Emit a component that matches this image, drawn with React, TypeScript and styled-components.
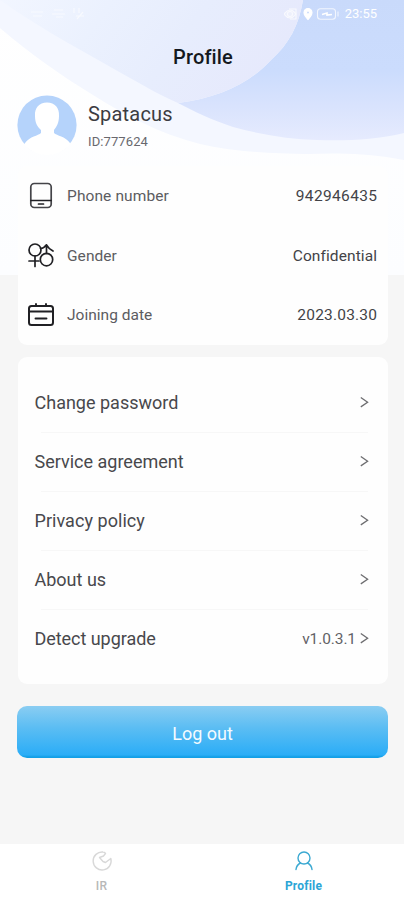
import React from "react";
import styled, { createGlobalStyle } from "styled-components";

const GlobalStyle = createGlobalStyle`
  * { box-sizing: border-box; }
  body { margin: 0; background: #f6f6f6; font-family: Roboto, "Liberation Sans", sans-serif; }
`;

const Screen = styled.div`
  position: relative;
  display: flex;
  flex-direction: column;
  width: 404px;
  height: 900px;
  overflow: hidden;
  background: #f6f6f6;
`;

const Backdrop = styled.svg`
  position: absolute;
  inset: 0 0 auto 0;
`;

const Content = styled.div`
  position: relative;
  flex: 1;
  display: flex;
  flex-direction: column;
`;

const StatusBar = styled.div`
  display: flex;
  align-items: center;
  height: 28px;
  padding: 0 27px 0 29px;
  color: #fff;
`;

const StatusGroup = styled.div<{ $end?: boolean }>`
  display: flex;
  align-items: center;
  margin-left: ${(p) => (p.$end ? "auto" : "0")};
`;

const Clock = styled.span`
  margin-left: 5px;
  font-size: 13px;
  line-height: 16px;
`;

const Title = styled.h1`
  margin: 0;
  height: 58px;
  padding-left: 2px;
  font-size: 20px;
  font-weight: 500;
  line-height: 58px;
  letter-spacing: 0.15px;
  text-align: center;
  color: #141820;
`;

const User = styled.div`
  display: flex;
  height: 80px;
  padding: 9px 17px 0;
`;

const UserText = styled.div`
  display: flex;
  flex-direction: column;
  margin-left: 11px;
`;

const UserName = styled.div`
  margin-top: 6px;
  font-size: 20px;
  line-height: 26px;
  letter-spacing: 0.2px;
  color: #3c3c42;
`;

const UserId = styled.div`
  margin-top: 7px;
  font-size: 13px;
  line-height: 16px;
  letter-spacing: 0.1px;
  color: #68686e;
`;

const Card = styled.section<{ $inset: string; $gap: number }>`
  margin: 0 16px ${(p) => p.$gap}px 17.5px;
  padding: ${(p) => p.$inset};
  border-radius: 9px;
  background: #fefefe;
`;

const InfoRow = styled.div`
  display: flex;
  align-items: center;
  height: 59.6px;
  padding-top: 1px;
  font-size: 15.5px;
  color: #5c5c61;
`;

const InfoIcon = styled.svg`
  width: 28px;
  height: 28px;
  margin-right: 12px;
  fill: none;
  stroke: #202024;
  stroke-width: 1.7;
  stroke-linecap: round;
  stroke-linejoin: round;
`;

const Label = styled.span<{ $track: number }>`
  letter-spacing: ${(p) => p.$track}px;
`;

const InfoValue = styled.span<{ $track: number }>`
  margin-left: auto;
  margin-right: ${(p) => 1 - p.$track}px;
  letter-spacing: ${(p) => p.$track}px;
  color: #434347;
`;

const MenuRow = styled.div`
  display: flex;
  align-items: center;
  height: 59px;
  font-size: 18px;
  color: #48484c;

  & + & {
    background: linear-gradient(#f7f7f7, #f7f7f7) 6px 0 / 327px 1px no-repeat;
  }
`;

const Version = styled.span`
  padding-top: 2px;
  font-size: 15.5px;
  letter-spacing: -0.1px;
  color: #626266;
`;

const MenuEnd = styled.span`
  display: flex;
  align-items: center;
  gap: 4px;
  margin-left: auto;
`;

const LogoutButton = styled.button`
  margin: 0 16px 0 17px;
  padding: 4px 6px 1px;
  height: 52px;
  border: 0;
  border-radius: 10px;
  background: linear-gradient(180deg, #8acdf2 0%, #5bbdf3 42%, #2badf7 94%, #129fe6 98%);
  font: 400 18px Roboto, sans-serif;
  color: #f4fbff;
`;

const TabBar = styled.nav`
  position: relative;
  display: grid;
  grid-template-columns: 1fr 1fr;
  height: 56px;
  background: #fff;
`;

const Tab = styled.div<{ $active?: boolean }>`
  display: flex;
  flex-direction: column;
  align-items: center;
  padding: 6px 0 0 1px;
  gap: 5px;
  font-size: 12px;
  font-weight: ${(p) => (p.$active ? 700 : 500)};
  line-height: 18px;
  letter-spacing: 0.2px;
  color: ${(p) => (p.$active ? "#2ba5d6" : "#b8b8b8")};
`;

const TabIcon = styled.svg`
  width: 22px;
  height: 22px;
  fill: none;
  stroke-width: 1.4;
  stroke-linecap: round;
  stroke-linejoin: round;
`;

function Waves() {
  return (
    <Backdrop width="404" height="275" viewBox="0 0 404 275">
      <defs>
        <linearGradient id="deep" x1="0" y1="0" x2="0" y2="1">
          <stop offset="0" stopColor="#c9dafb" />
          <stop offset="0.5" stopColor="#cbdcfd" />
          <stop offset="0.76" stopColor="#d9e3fd" />
          <stop offset="1" stopColor="#e6ebfe" />
        </linearGradient>
        <linearGradient id="orb" x1="0" y1="0" x2="1" y2="0.25">
          <stop offset="0" stopColor="#f2f6ff" />
          <stop offset="0.35" stopColor="#ebf1fe" />
          <stop offset="0.65" stopColor="#e7edfd" />
          <stop offset="1" stopColor="#e6e9fc" />
        </linearGradient>
        <linearGradient id="base" x1="0" y1="0" x2="0" y2="1">
          <stop offset="0" stopColor="#fff" />
          <stop offset="1" stopColor="#fcfdff" />
        </linearGradient>
      </defs>
      <rect width="404" height="275" fill="url(#base)" />
      <path d="M0 0H404V160Q370 153 333 153.500C290 155 240 153 200 144C160 134 125 115 93 95C60 75 28 52 0 28Z" fill="#f4f7ff" />
      <path d="M178 103C218 98 250 83 271 60C289 44 299 25 303 0H404V133C375 140 345 141 317 140C290 139 262 135 233 127C212 120 195 112 178 103Z" fill="url(#deep)" />
      <path d="M0 0H303C299 25 289 44 271 60C250 83 218 98 178 103C160 95 146 87 130 78C92 56 45 32 0 0Z" fill="url(#orb)" />
    </Backdrop>
  );
}

function Avatar() {
  return (
    <svg width="60" height="60" viewBox="0 0 60 60">
      <defs>
        <clipPath id="disc"><circle cx="30" cy="30" r="30" /></clipPath>
      </defs>
      <circle cx="30" cy="30" r="29.6" fill="#b5d3fb" />
      <g clipPath="url(#disc)" fill="#fff">
        <path d="M30 7.500C38 7.500 42.500 13 42 21C42 28 39.500 32 37 35V38C40 41 48 41 53 48L60 60H0L8 48C13 41 21 41 24 38V35C20.500 32 18 28 18 21C17.500 13 22 7.500 30 7.500Z" />
        <path d="M4 49H56V60H4Z" />
      </g>
    </svg>
  );
}

const PhoneIcon = () => (
  <InfoIcon viewBox="0 0 28 28">
    <rect x="3.800" y="1.500" width="20.400" height="24" rx="3.500" stroke="#444448" />
    <path d="M4 18.500H24M11.500 22H16.500" />
  </InfoIcon>
);

const GenderIcon = () => (
  <InfoIcon viewBox="0 0 28 28">
    <circle cx="8" cy="8" r="6" />
    <circle cx="19.500" cy="17.600" r="6.200" />
    <path d="M8 14V24.500M2 19H12M19.500 11.500V3M13.500 6.500Q17.500 6 19.500 2.800Q21.500 6.500 26 9" />
  </InfoIcon>
);

const CalendarIcon = () => (
  <InfoIcon viewBox="0 0 28 28">
    <rect x="2" y="5" width="24" height="19" rx="2.500" strokeWidth="2" />
    <path d="M2 10.500H26M9 3V5M19 3V5M8.500 17.500H19.500" strokeWidth="1.900" />
  </InfoIcon>
);

const Chevron = () => (
  <svg width="9" height="12" viewBox="0 0 9 12" fill="none" stroke="#6d6d70" strokeWidth="1.300">
    <path d="M0.800 1.500L7.600 6.200L0.800 10.900" />
  </svg>
);

const infoRows = [
  { icon: <PhoneIcon />, label: "Phone number", value: "942946435", track: 0.1, valueTrack: 0.35 },
  { icon: <GenderIcon />, label: "Gender", value: "Confidential", track: 0.05, valueTrack: 0.1 },
  { icon: <CalendarIcon />, label: "Joining date", value: "2023.03.30", track: 0.02, valueTrack: 0.2 },
];

const menuRows = [
  { label: "Change password", track: 0 },
  { label: "Service agreement", track: 0 },
  { label: "Privacy policy", track: 0.05 },
  { label: "About us", track: 0 },
  { label: "Detect upgrade", track: -0.05, version: "v1.0.3.1" },
];

export default function App() {
  return (
    <Screen>
      <GlobalStyle />
      <Waves />
      <Content>
        <StatusBar>
          <StatusGroup>
            <svg width="60" height="16" viewBox="0 0 60 16" fill="none" stroke="#fff" strokeWidth="1.200" opacity=".6">
              <path d="M2 6H14M4 10H13M25 4H34M23 8H36M27 11H34M45 2V7M50 2V7M47 10H55M48 13L54 6" />
            </svg>
          </StatusGroup>
          <StatusGroup $end>
            <svg width="56" height="16" viewBox="0 0 56 16" fill="none" stroke="#fff" strokeWidth="1.100">
              <g opacity=".75">
                <path d="M0 8Q6 0 12 8Q6 16 0 8Z" fill="#fff" fillOpacity=".4" />
                <circle cx="6" cy="8" r="2.500" />
                <path d="M5 3H12V13H6" />
              </g>
              <path d="M24 2.500A4 4 0 0 1 28 6.500C28 9.500 24 13.500 24 13.500S20 9.500 20 6.500A4 4 0 0 1 24 2.500ZM24 5A1.500 1.500 0 1 0 24 8A1.500 1.500 0 1 0 24 5Z" fill="#fff" fillRule="evenodd" />
              <rect x="33.500" y="2.800" width="18" height="10.400" rx="3" opacity=".75" />
              <path d="M54 5.500V10.500" opacity=".75" />
              <path d="M38 8.500L43 7V9L48 8.500" strokeWidth="1.600" />
            </svg>
            <Clock>23:55</Clock>
          </StatusGroup>
        </StatusBar>
        <Title>Profile</Title>
        <User>
          <Avatar />
          <UserText>
            <UserName>Spatacus</UserName>
            <UserId>ID:777624</UserId>
          </UserText>
        </User>
        <Card $inset="0 10px 0 9.5px" $gap={12}>
          {infoRows.map((r) => (
            <InfoRow key={r.label}>
              {r.icon}
              <Label $track={r.track}>{r.label}</Label>
              <InfoValue $track={r.valueTrack}>{r.value}</InfoValue>
            </InfoRow>
          ))}
        </Card>
        <Card $inset="16px 19px 16px 17px" $gap={22}>
          {menuRows.map((r) => (
            <MenuRow key={r.label}>
              <Label $track={r.track}>{r.label}</Label>
              <MenuEnd>
                {r.version && <Version>{r.version}</Version>}
                <Chevron />
              </MenuEnd>
            </MenuRow>
          ))}
        </Card>
        <LogoutButton>Log out</LogoutButton>
      </Content>
      <TabBar>
        <Tab>
          <TabIcon viewBox="0 0 22 22" stroke="#d8d8d8">
            <path d="M12 2A9 9 0 1 0 19.800 8.500L14.500 12.500L12 11.500L8.500 7.500L12.500 6L14.500 3.500Q13.500 2 12 2Z" />
          </TabIcon>
          IR
        </Tab>
        <Tab $active>
          <TabIcon viewBox="0 0 22 22" stroke="#3ba9d2">
            <circle cx="11" cy="8" r="6" />
            <path d="M7.500 13Q3.500 15 3 19.500M14.500 13Q18.500 15 19 19.500" />
          </TabIcon>
          Profile
        </Tab>
      </TabBar>
    </Screen>
  );
}
